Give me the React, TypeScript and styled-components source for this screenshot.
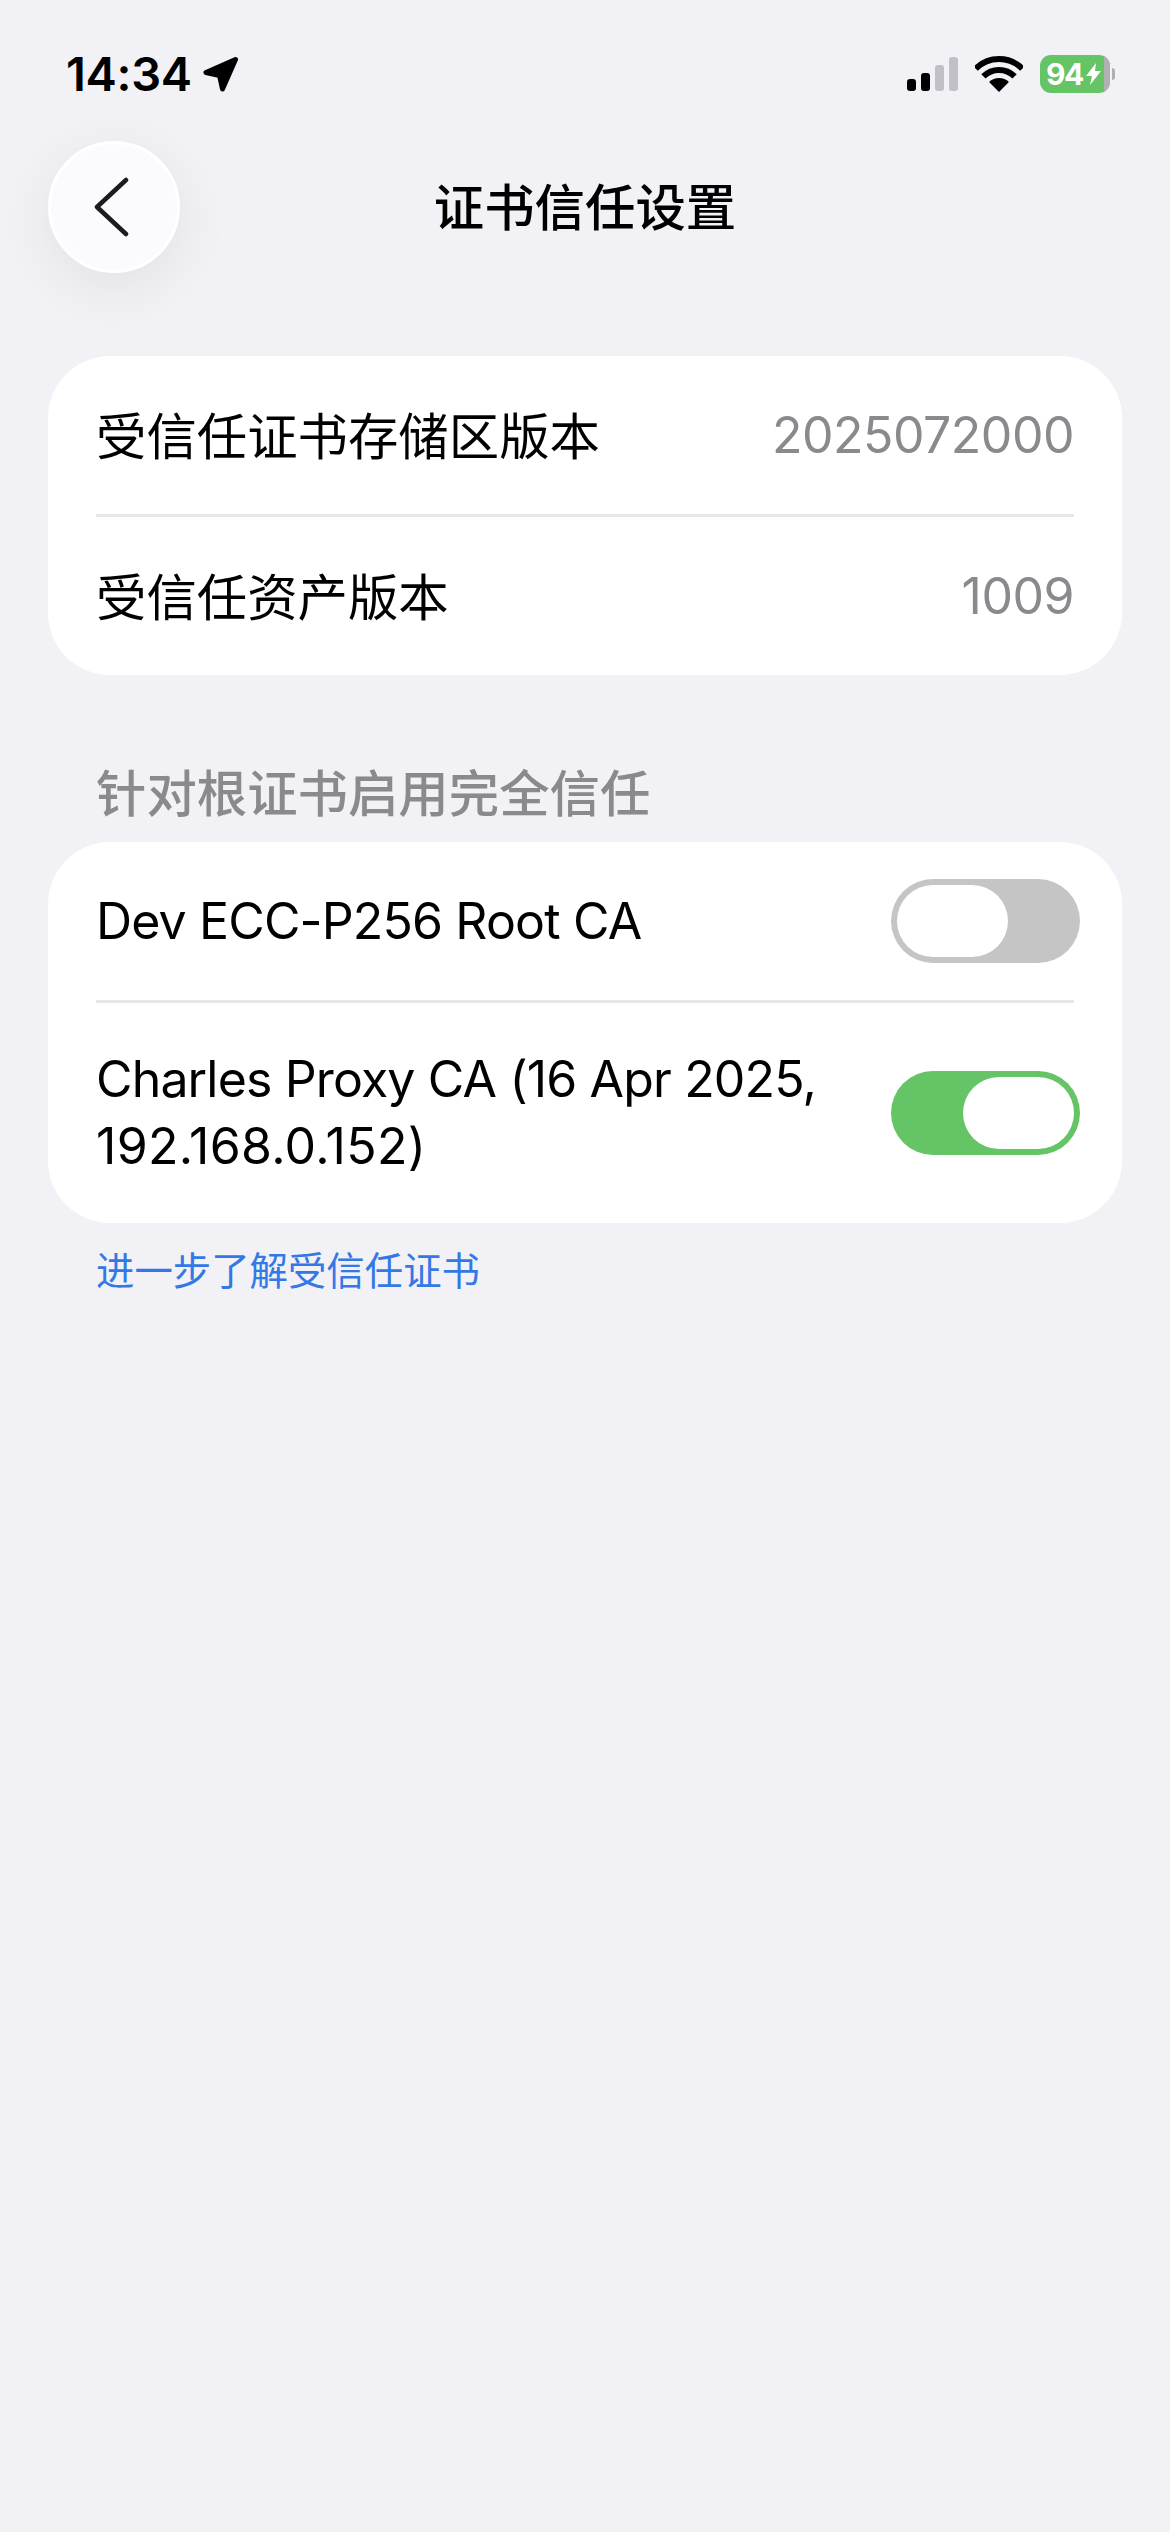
import styled, { createGlobalStyle } from 'styled-components'

const GlobalStyle = createGlobalStyle`
  html, body {
    margin: 0;
    padding: 0;
    background: #f1f1f6;
  }
  * {
    box-sizing: border-box;
  }
`

const LATIN = `Inter, "Noto Sans CJK SC", sans-serif`
const CJK = `"Noto Sans CJK SC", Inter, sans-serif`

export default function App() {
  return (
    <>
      <GlobalStyle />
      <Page>
        <StatusBar>
          <TimeGroup>
            <Time>14:34</Time>
            <svg width="36" height="36" viewBox="0 0 36 36">
              <path d="M32.5 3.5 L3 16.5 L16.5 19.5 L19.5 33 Z" fill="#000" stroke="#000" strokeWidth="5" strokeLinejoin="round" />
            </svg>
          </TimeGroup>
          <StatusIcons>
            <Signal>
              <SignalBar $height={12} $active />
              <SignalBar $height={18} $active />
              <SignalBar $height={26} />
              <SignalBar $height={34} />
            </Signal>
            <svg width="48" height="36" viewBox="0 0 48 36">
              <path d="M0.7 12.7 A33 33 0 0 1 47.3 12.7" fill="none" stroke="#000" strokeWidth="6" />
              <path d="M8.4 20.4 A22 22 0 0 1 39.6 20.4" fill="none" stroke="#000" strokeWidth="6" />
              <path d="M24 36 L14.1 26.1 A14 14 0 0 1 33.9 26.1 Z" fill="#000" />
            </svg>
            <Battery>
              <BatteryBody>
                <BatteryLevel>94</BatteryLevel>
                <BoltIcon width="15" height="22" viewBox="0 0 15 22">
                  <path d="M10 0 L0 13 H6 L4 22 L15 8 H9 Z" fill="#fff" />
                </BoltIcon>
                <BatteryRest />
              </BatteryBody>
              <BatteryNub />
            </Battery>
          </StatusIcons>
        </StatusBar>

        <NavBar>
          <BackButton>
            <svg width="40" height="60" viewBox="0 0 40 60">
              <path d="M33 3 L4 30 L33 57" fill="none" stroke="#1c1c1e" strokeWidth="4.5" strokeLinecap="round" strokeLinejoin="round" />
            </svg>
          </BackButton>
          <Title>证书信任设置</Title>
        </NavBar>

        <Content>
          <Card>
            <Row>
              <Label>受信任证书存储区版本</Label>
              <Value>2025072000</Value>
            </Row>
            <Divider />
            <Row>
              <Label>受信任资产版本</Label>
              <Value>1009</Value>
            </Row>
          </Card>

          <SectionHeader>针对根证书启用完全信任</SectionHeader>
          <Card>
            <Row>
              <CertName>Dev ECC-P256 Root CA</CertName>
              <Toggle $on={false}>
                <Knob />
              </Toggle>
            </Row>
            <Divider />
            <Row $tall>
              <CertName>
                Charles Proxy CA (16 Apr 2025,
                <br />
                <CertAddress>192.168.0.152)</CertAddress>
              </CertName>
              <Toggle $on>
                <Knob />
              </Toggle>
            </Row>
          </Card>
          <LearnMore>进一步了解受信任证书</LearnMore>
        </Content>
      </Page>
    </>
  )
}

const Page = styled.div`
  width: 1170px;
  height: 2532px;
  background: #f1f1f6;
  overflow: hidden;
`

const StatusBar = styled.div`
  height: 141px;
  padding: 7px 55px 0 66px;
  display: flex;
  align-items: center;
  justify-content: space-between;
`

const TimeGroup = styled.div`
  display: flex;
  align-items: center;
  gap: 11px;
`

const Time = styled.span`
  font-family: ${LATIN};
  font-size: 47px;
  font-weight: 600;
  line-height: 48px;
  letter-spacing: -0.3px;
  color: #000;
`

const StatusIcons = styled.div`
  display: flex;
  align-items: center;
  gap: 17px;
`

const Signal = styled.div`
  display: flex;
  align-items: flex-end;
  gap: 5px;
  height: 34px;
`

const SignalBar = styled.div<{ $height: number; $active?: boolean }>`
  width: 9px;
  height: ${(p) => p.$height}px;
  border-radius: 3px;
  background: ${(p) => (p.$active ? '#000' : '#c0c0c6')};
`

const Battery = styled.div`
  display: flex;
  align-items: center;
  gap: 2px;
`

const BatteryBody = styled.div`
  width: 70px;
  height: 38px;
  border-radius: 11px;
  background: #64c466;
  overflow: hidden;
  display: flex;
  align-items: center;
  padding-left: 6px;
  gap: 3px;
`

const BatteryLevel = styled.span`
  font-family: ${LATIN};
  font-size: 30px;
  font-weight: 700;
  line-height: 30px;
  letter-spacing: -1.5px;
  color: #fff;
`

const BoltIcon = styled.svg`
  flex: none;
`

const BatteryRest = styled.div`
  flex: none;
  width: 6px;
  height: 38px;
  margin-left: auto;
  background: #b0b0b4;
`

const BatteryNub = styled.div`
  width: 3px;
  height: 12px;
  border-radius: 0 4px 4px 0;
  background: #b0b0b4;
`

const NavBar = styled.div`
  height: 132px;
  padding: 0 48px;
  display: grid;
  grid-template-columns: 132px 1fr 132px;
  align-items: center;
`

const BackButton = styled.div`
  width: 132px;
  height: 132px;
  border-radius: 50%;
  background: #fbfbfe;
  border: 3px solid #ffffff;
  box-shadow: 0 14px 60px rgba(0, 0, 0, 0.07);
  display: flex;
  align-items: center;
  justify-content: center;
  padding-right: 3px;
`

const Title = styled.div`
  font-family: ${CJK};
  font-size: 50.4px;
  font-weight: 500;
  line-height: 60px;
  padding-bottom: 4px;
  color: #000;
  text-align: center;
`

const Content = styled.div`
  padding: 83px 48px 0;
`

const Card = styled.div`
  background: #fff;
  border-radius: 62px;
  overflow: hidden;
`

const Row = styled.div<{ $tall?: boolean }>`
  height: ${(p) => (p.$tall ? 220 : 158)}px;
  padding: 0 48px;
  display: flex;
  align-items: center;
  justify-content: space-between;
`

const Divider = styled.div`
  height: 3px;
  margin: 0 48px;
  background: #e7e7e9;
`

const Label = styled.span`
  font-family: ${CJK};
  font-size: 50.4px;
  font-weight: 400;
  line-height: 60px;
  padding-bottom: 2px;
  color: #000;
`

const Value = styled.span`
  font-family: ${LATIN};
  font-size: 50px;
  font-weight: 400;
  line-height: 60px;
  letter-spacing: -0.5px;
  color: #8a8a8e;
`

const CertName = styled.span`
  font-family: ${LATIN};
  font-size: 50px;
  font-weight: 400;
  line-height: 67px;
  letter-spacing: -0.85px;
  color: #000;
`

const CertAddress = styled.span`
  letter-spacing: 0.3px;
`

const SectionHeader = styled.div`
  margin: 86px 48px 21px;
  font-family: ${CJK};
  font-size: 50.4px;
  font-weight: 500;
  line-height: 60px;
  color: #8a8a8e;
`

const Toggle = styled.div<{ $on: boolean }>`
  flex: none;
  width: 189px;
  height: 84px;
  margin-right: -6px;
  padding: 6px;
  border-radius: 42px;
  background: ${(p) => (p.$on ? '#64c466' : '#c5c5c5')};
  display: flex;
  justify-content: ${(p) => (p.$on ? 'flex-end' : 'flex-start')};
`

const Knob = styled.div`
  width: 111px;
  height: 72px;
  border-radius: 36px;
  background: #fff;
`

const LearnMore = styled.div`
  margin: 21px 48px 0;
  font-family: ${CJK};
  font-size: 38.4px;
  font-weight: 400;
  line-height: 48px;
  color: #3478e5;
`
